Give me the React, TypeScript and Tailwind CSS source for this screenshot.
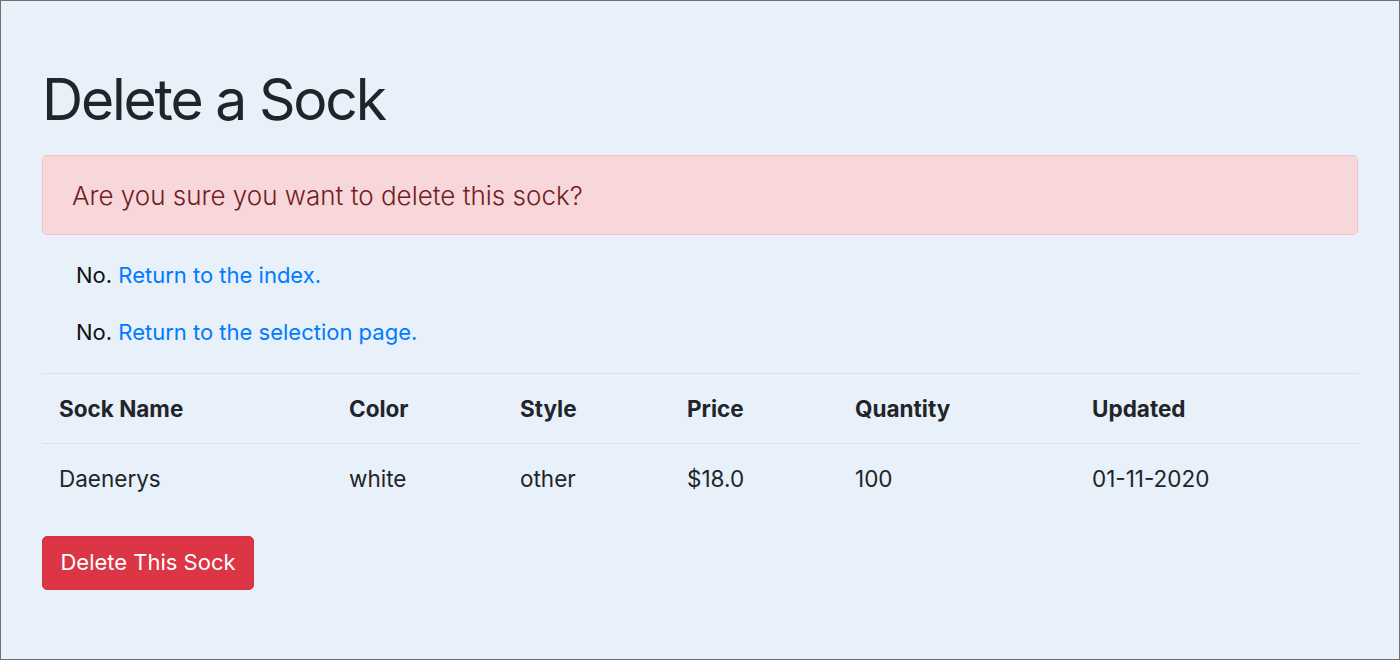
import React from "react";

export default function App() {
  const headers = ["Sock Name", "Color", "Style", "Price", "Quantity", "Updated"];
  const row = ["Daenerys", "white", "other", "$18.0", "100", "01-11-2020"];
  const widths = ["w-[290px]", "w-[171px]", "w-[167px]", "w-[168px]", "w-[237px]", "w-[284px]"];
  return (
    <div
      className="w-[1400px] h-[660px] border border-[#6f6f6f] bg-[#e8f0fa] text-[#212529] overflow-hidden"
      style={{ fontFamily: "Inter, 'Noto Sans', sans-serif" }}
    >
      <div className="px-[41px] pt-[64px]">
        <h1 className="text-[57px] leading-[69px] font-normal tracking-[-2.2px]">Delete a Sock</h1>
        <div className="mt-[21px] h-[80px] flex items-center rounded-[5px] border border-[#f3c5ca] bg-[#f8d7da] px-[29px] text-[26px] text-[#721c24] font-light">
          Are you sure you want to delete this sock?
        </div>
        <div className="pl-[34px] pt-[24px] text-[22px] leading-[33px]">
          <p className="text-[#111]">
            No. <a className="text-[#007bff]">Return to the index.</a>
          </p>
          <p className="mt-[24px] text-[#111]">
            No. <a className="text-[#007bff]">Return to the selection page.</a>
          </p>
        </div>
        <table className="mt-[24px] w-[1317px] border-collapse text-[22.5px]">
          <thead>
            <tr className="border-t border-[#d9e0e8]">
              {headers.map((h, i) => (
                <th key={h} className={`${widths[i]} h-[70px] px-[17px] text-left font-bold align-middle`}>
                  {h}
                </th>
              ))}
            </tr>
          </thead>
          <tbody>
            <tr className="border-t border-[#d9e0e8]">
              {row.map((c, i) => (
                <td key={i} className={`${widths[i]} h-[70px] px-[17px] text-left align-middle`}>
                  {c}
                </td>
              ))}
            </tr>
          </tbody>
        </table>
        <button className="mt-[22px] w-[212px] h-[54px] rounded-[5px] bg-[#dc3545] border border-[#d9303f] text-white text-[22px]">
          Delete This Sock
        </button>
      </div>
    </div>
  );
}
